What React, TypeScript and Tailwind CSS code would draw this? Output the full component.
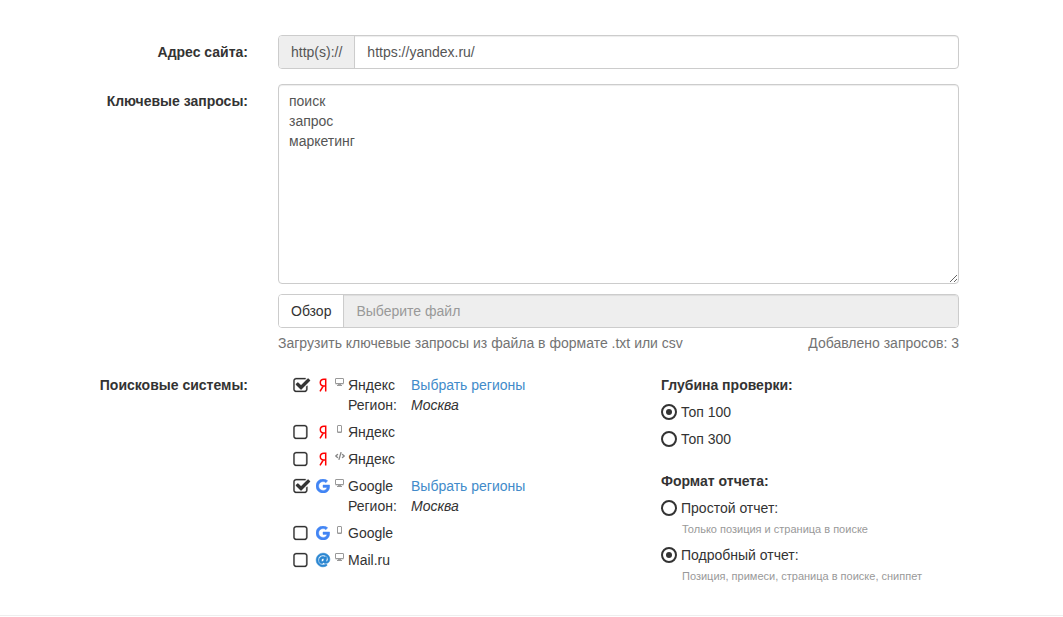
import { useState } from "react";
import type { ReactNode } from "react";
import { FaAt, FaCode } from "react-icons/fa";

type Device = "desktop" | "mobile" | "code";
type Brand = "yandex" | "google" | "mail";

interface Engine {
  id: string;
  brand: Brand;
  device: Device;
  name: string;
  checked: boolean;
  region?: string;
}

const engines: Engine[] = [
  { id: "yandex-desktop", brand: "yandex", device: "desktop", name: "Яндекс", checked: true, region: "Москва" },
  { id: "yandex-mobile", brand: "yandex", device: "mobile", name: "Яндекс", checked: false },
  { id: "yandex-xml", brand: "yandex", device: "code", name: "Яндекс", checked: false },
  { id: "google-desktop", brand: "google", device: "desktop", name: "Google", checked: true, region: "Москва" },
  { id: "google-mobile", brand: "google", device: "mobile", name: "Google", checked: false },
  { id: "mail", brand: "mail", device: "desktop", name: "Mail.ru", checked: false },
];

const BrandIcon = ({ brand }: { brand: Brand }) => {
  if (brand === "yandex") {
    return (
      <svg viewBox="0 0 8 14" className="h-[14px] w-2 fill-none stroke-[#ff0000]" strokeWidth="1.5">
        <path d="M6.7 13.5V1.2H4.9C2.6 1.2 1.3 2.4 1.3 4.6C1.3 6.8 2.6 8 4.7 8H6.7M4.3 8L1 13.4" />
      </svg>
    );
  }
  if (brand === "mail") {
    return <FaAt className="size-[14px] overflow-visible stroke-[#2a86d1] text-[#2a86d1]" strokeWidth="24" />;
  }
  return (
    <svg viewBox="128 128 1536 1536" className="size-[14px] fill-[#4285f4] stroke-[#4285f4]" strokeWidth="50">
      <path d="M896 786h725q12 67 12 128 0 217-91 387.5t-259.5 266.5-386.5 96q-157 0-299-60.5t-245-163.5-163.5-245-60.5-299 60.5-299 163.5-245 245-163.5 299-60.5q300 0 515 201l-209 201q-123-119-306-119-129 0-238.5 65t-173.5 176.5-64 243.5 64 243.5 173.5 176.5 238.5 65q87 0 160-24t120-60 82-82 51.5-87 22.5-78h-436v-264z" />
    </svg>
  );
};

const DeviceIcon = ({ device }: { device: Device }) => {
  if (device === "code") return <FaCode className="h-2 w-[10px] shrink-0 text-[#888]" />;
  if (device === "mobile") {
    return (
      <svg viewBox="0 0 9 9" className="size-[9px] fill-none stroke-[#999]">
        <rect x="2.5" y="0.5" width="4" height="7" rx="0.5" />
        <path d="M2.5 7h4" />
      </svg>
    );
  }
  return (
    <svg viewBox="0 0 9 9" className="size-[9px] fill-none stroke-[#999]">
      <rect x="0.5" y="0.5" width="8" height="5" rx="0.3" />
      <path d="M0.5 5.8h8M3 6.6h3M2 7.5h5" />
    </svg>
  );
};

const EngineRow = ({ engine }: { engine: Engine }) => {
  const [checked, setChecked] = useState(engine.checked);

  return (
    <li className="flex items-start">
      <label className="relative flex h-5 items-center">
        <input
          type="checkbox"
          checked={checked}
          onChange={(e) => setChecked(e.target.checked)}
          className="peer sr-only"
        />
        {checked ? (
          <svg viewBox="32 -64 1792 1792" className="mr-1 size-[18px] fill-[#333] stroke-[#333]" strokeWidth="24">
            <path d="M1472 930v318q0 119-84.5 203.5t-203.5 84.5h-832q-119 0-203.5-84.5t-84.5-203.5v-832q0-119 84.5-203.5t203.5-84.5h832q63 0 117 25 15 7 18 23 3 17-9 29l-49 49q-10 10-23 10-3 0-9-2-23-6-45-6h-832q-66 0-113 47t-47 113v832q0 66 47 113t113 47h832q66 0 113-47t47-113v-254q0-13 9-22l64-64q10-10 23-10 6 0 12 3 20 8 20 29zm231-489l-814 814q-24 24-57 24t-57-24l-430-430q-24-24-24-57t24-57l110-110q24-24 57-24t57 24l263 263 647-647q24-24 57-24t57 24l110 110q24 24 24 57t-24 57z" />
          </svg>
        ) : (
          <svg viewBox="160 -64 1792 1792" className="mr-1 size-[18px] fill-[#333] stroke-[#333]" strokeWidth="24">
            <path d="M1312 256h-832q-66 0-113 47t-47 113v832q0 66 47 113t113 47h832q66 0 113-47t47-113v-832q0-66-47-113t-113-47zm288 160v832q0 119-84.5 203.5t-203.5 84.5h-832q-119 0-203.5-84.5t-84.5-203.5v-832q0-119 84.5-203.5t203.5-84.5h832q119 0 203.5 84.5t84.5 203.5z" />
          </svg>
        )}
        <span className="mr-1 flex w-4 justify-center">
          <BrandIcon brand={engine.brand} />
        </span>
        <span className="mr-1 flex h-5 w-[9px] items-start justify-center pt-[3px]">
          <DeviceIcon device={engine.device} />
        </span>
        <span className="w-[63px]">{engine.name}</span>
      </label>
      {engine.region && (
        <div>
          <a href="#regions" className="text-[#428bca]">
            Выбрать регионы
          </a>
          <div className="-ml-[63px] flex">
            <span className="w-[63px]">Регион:</span>
            <em>{engine.region}</em>
          </div>
        </div>
      )}
    </li>
  );
};

interface RadioProps {
  name: string;
  label: string;
  hint?: string;
  defaultChecked?: boolean;
}

const Radio = ({ name, label, hint, defaultChecked }: RadioProps) => (
  <div>
    <label className="flex items-center gap-1">
      <input
        type="radio"
        name={name}
        defaultChecked={defaultChecked}
        className="size-4 appearance-none rounded-full border-2 border-[#333] bg-clip-content p-[3px] checked:bg-[#333]"
      />
      {label}
    </label>
    {hint && <p className="pt-0.5 pl-[21px] text-[11px] leading-[18px] text-[#999]">{hint}</p>}
  </div>
);

interface FieldProps {
  label: string;
  htmlFor?: string;
  children: ReactNode;
}

const Field = ({ label, htmlFor, children }: FieldProps) => (
  <div className="grid grid-cols-[263fr_711fr_89fr]">
    {htmlFor ? (
      <label htmlFor={htmlFor} className="px-[15px] pt-[7px] text-right font-bold">
        {label}
      </label>
    ) : (
      <span className="px-[15px] pt-[7px] text-right font-bold">{label}</span>
    )}
    <div className="min-w-0 px-[15px]">{children}</div>
  </div>
);

export default function App() {
  const [queries, setQueries] = useState("поиск\nзапрос\nмаркетинг");
  const count = queries.split("\n").filter((q) => q.trim()).length;

  return (
    <main className="bg-white font-['Liberation_Sans',Arial,sans-serif] text-sm leading-5 text-[#333]">
      <form className="flex flex-col gap-[15px] pt-[35px] pb-[30px]">
        <Field label="Адрес сайта:" htmlFor="site">
          <div className="flex h-[34px] rounded border border-[#ccc]">
            <span className="rounded-l-[3px] border-r border-[#ccc] bg-[#eee] px-3 py-1.5 text-[#555]">http(s)://</span>
            <input
              id="site"
              type="text"
              defaultValue="https://yandex.ru/"
              className="min-w-0 flex-1 rounded-r-[3px] px-3 text-[#555] shadow-[inset_0_1px_1px_rgba(0,0,0,0.075)] outline-none"
            />
          </div>
        </Field>

        <Field label="Ключевые запросы:" htmlFor="queries">
          <textarea
            id="queries"
            value={queries}
            onChange={(e) => setQueries(e.target.value)}
            className="block h-[200px] w-full resize-y rounded border border-[#ccc] px-[10px] py-1.5 text-[#555] shadow-[inset_0_1px_1px_rgba(0,0,0,0.075)] outline-none"
          />
          <div className="mt-[10px] flex h-[34px] rounded border border-[#ccc]">
            <button type="button" className="rounded-l-[3px] border-r border-[#ccc] bg-white px-3">
              Обзор
            </button>
            <input
              type="text"
              readOnly
              aria-label="Выберите файл"
              placeholder="Выберите файл"
              className="min-w-0 flex-1 rounded-r-[3px] bg-[#eee] px-3 shadow-[inset_0_1px_1px_rgba(0,0,0,0.075)] outline-none placeholder:text-[#999]"
            />
          </div>
          <div className="mt-[5px] flex justify-between text-[#737373]">
            <span>Загрузить ключевые запросы из файла в формате .txt или csv</span>
            <span>Добавлено запросов: {count}</span>
          </div>
        </Field>

        <Field label="Поисковые системы:">
          <div className="grid grid-cols-[383fr_298fr] pt-[7px]">
            <ul className="flex flex-col gap-[7px] pl-[15px]">
              {engines.map((engine) => (
                <EngineRow key={engine.id} engine={engine} />
              ))}
            </ul>
            <div className="flex flex-col gap-[22px]">
              <fieldset className="flex flex-col gap-[7px]">
                <legend className="mb-[7px] font-bold">Глубина проверки:</legend>
                <Radio name="depth" label="Топ 100" defaultChecked />
                <Radio name="depth" label="Топ 300" />
              </fieldset>
              <fieldset className="flex flex-col gap-[7px]">
                <legend className="mb-[7px] font-bold">Формат отчета:</legend>
                <Radio name="format" label="Простой отчет:" hint="Только позиция и страница в поиске" />
                <Radio
                  name="format"
                  label="Подробный отчет:"
                  hint="Позиция, примеси, страница в поиске, сниппет"
                  defaultChecked
                />
              </fieldset>
            </div>
          </div>
        </Field>
      </form>
      <hr className="border-[#eee]" />
    </main>
  );
}
